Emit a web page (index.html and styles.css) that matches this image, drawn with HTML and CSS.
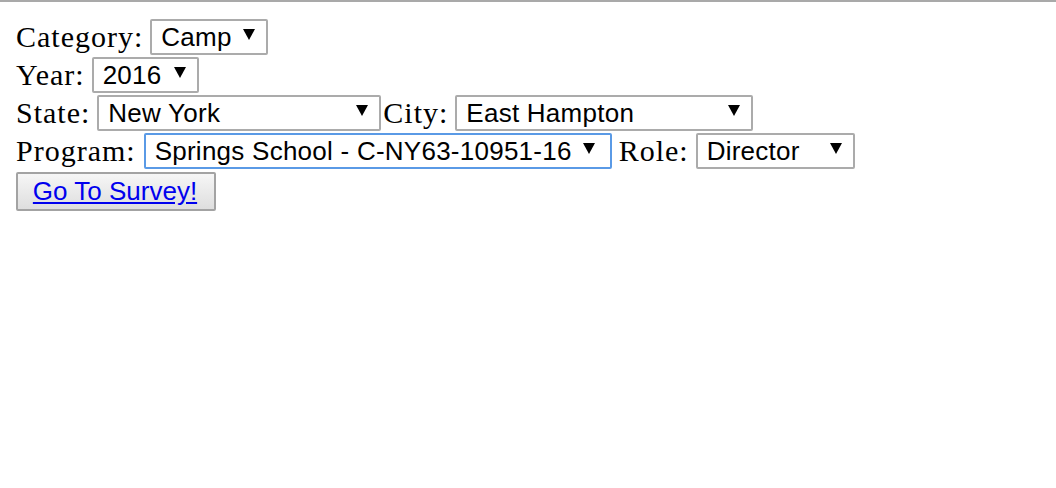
FILE: index.html
```html
<!DOCTYPE html>
<html>
<head>
<meta charset="utf-8">
<link rel="stylesheet" href="styles.css">
</head>
<body>
<div class="topline"></div>
<form class="form">
  <div class="row">
    <label class="label">Category:</label>
    <span class="sel sel-category"><select><option>Camp</option></select></span>
  </div>
  <div class="row">
    <label class="label">Year:</label>
    <span class="sel sel-year"><select><option>2016</option></select></span>
  </div>
  <div class="row">
    <label class="label">State:</label>
    <span class="sel sel-state"><select><option>New York</option></select></span>
    <label class="label label-city">City:</label>
    <span class="sel sel-city"><select><option>East Hampton</option></select></span>
  </div>
  <div class="row">
    <label class="label label-program">Program:</label>
    <span class="sel sel-program focused"><select><option>Springs School - C-NY63-10951-16</option></select></span>
    <label class="label label-role">Role:</label>
    <span class="sel sel-role"><select><option>Director</option></select></span>
  </div>
  <div class="row row-button">
    <button type="button" class="go"><a href="#" class="go-link">Go To Survey!</a></button>
  </div>
</form>
</body>
</html>
```

FILE: styles.css
```css
html, body {
  margin: 0;
  padding: 0;
  background: #ffffff;
}

.topline {
  height: 2px;
  background: #a9a9a9;
}

.form {
  display: flex;
  flex-direction: column;
  align-items: flex-start;
  gap: 2px;
  padding: 17px 16px 0 16px;
}

.row {
  display: flex;
  align-items: center;
  height: 36px;
}

.label {
  font-family: "Liberation Serif", "Times New Roman", serif;
  font-size: 30px;
  letter-spacing: 1px;
  color: #000;
  margin-right: 7px;
  line-height: 36px;
}

.label-program {
  margin-right: 8px;
}

.label-city {
  margin-left: 2px;
}

.label-role {
  margin-left: 7px;
}

.sel {
  position: relative;
  display: block;
  height: 36px;
}

.sel select {
  appearance: none;
  -webkit-appearance: none;
  box-sizing: border-box;
  width: 100%;
  height: 36px;
  margin: 0;
  padding: 0 30px 0 9px;
  border: 2px solid #ababab;
  border-radius: 2px;
  background: #ffffff;
  font-family: "Liberation Sans", Arial, sans-serif;
  font-size: 26px;
  letter-spacing: 0.25px;
  color: #000;
  line-height: 32px;
}

.sel::after {
  content: "";
  position: absolute;
  right: 13px;
  top: 10px;
  width: 0;
  height: 0;
  border-left: 6px solid transparent;
  border-right: 6px solid transparent;
  border-top: 11px solid #000;
  pointer-events: none;
}

.sel-category { width: 118px; }
.sel-year { width: 107px; }
.sel-state { width: 284px; }
.sel-city { width: 298px; }
.sel-program { width: 468px; }
.sel-role { width: 159px; }

.sel-program::after {
  right: 17px;
}

.focused select {
  border-color: #5a9ae6;
}

.row-button {
  height: 39px;
  margin-top: 1px;
}

.go {
  box-sizing: border-box;
  width: 200px;
  height: 39px;
  margin: 0;
  padding: 0 2px 0 0;
  border: 2px solid #a3a3a3;
  border-radius: 2px;
  background: linear-gradient(#f6f6f6, #dedede);
  text-align: center;
}

.go-link {
  font-family: "Liberation Sans", Arial, sans-serif;
  font-size: 26px;
  color: #0000ee;
  text-decoration: underline;
}
```
